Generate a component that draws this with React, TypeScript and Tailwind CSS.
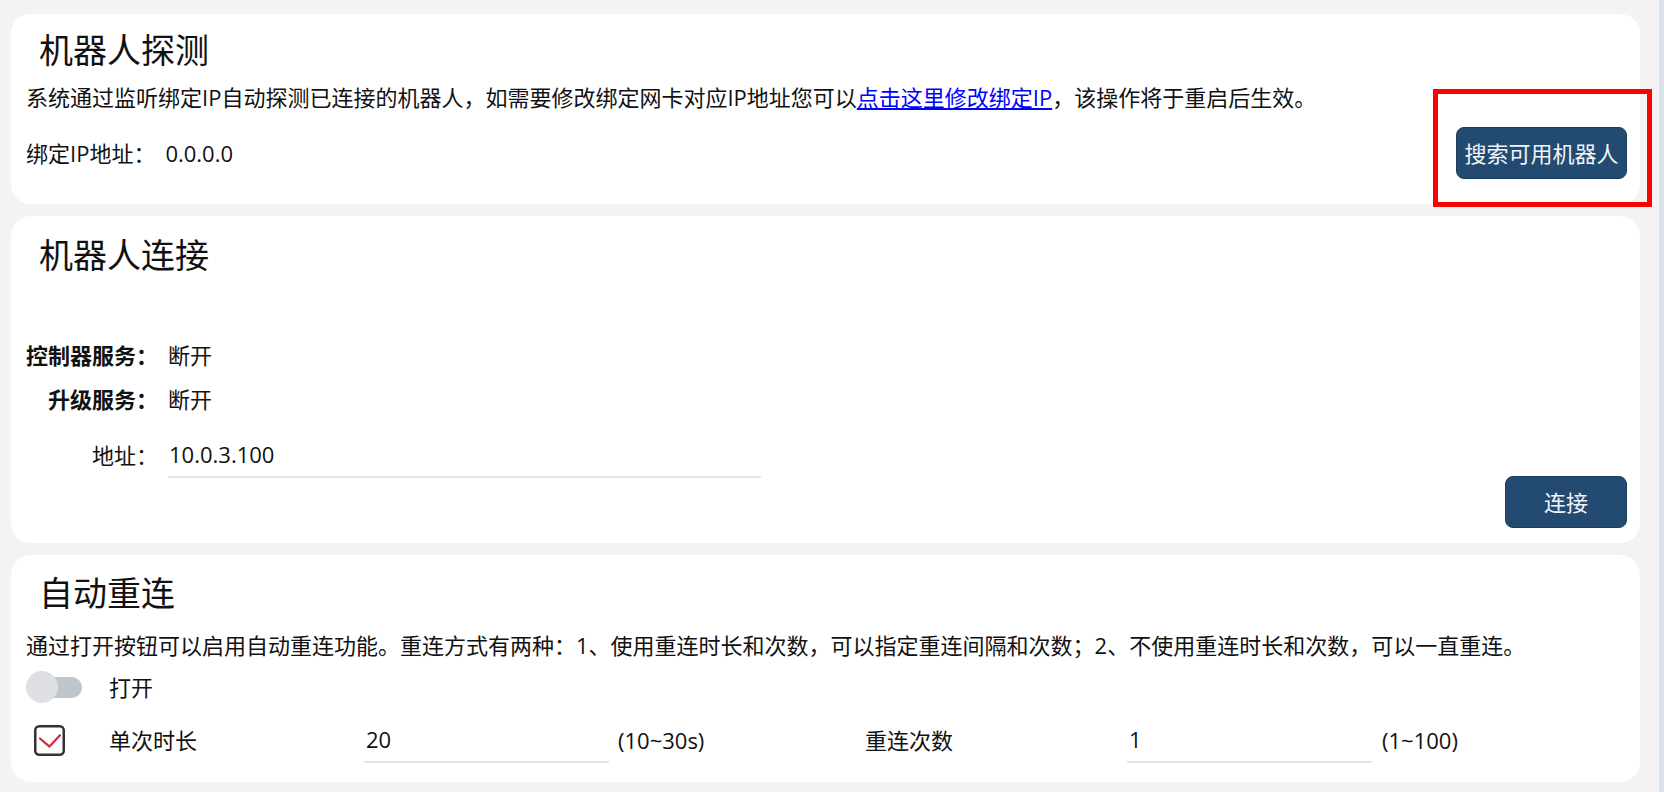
import React from 'react';

const font = { fontFamily: '"Open Sans", "Noto Sans CJK SC", sans-serif' };

function Toggle() {
  return (
    <div className="relative w-[56px] h-[32px]">
      <div className="absolute left-[16px] top-[5.5px] w-[40px] h-[21px] rounded-full bg-[#c0c4cb]" />
      <div className="absolute left-0 top-0 w-[32px] h-[32px] rounded-full bg-[#dedfe2]" />
    </div>
  );
}

function CheckBox() {
  return (
    <svg width="31" height="31" viewBox="0 0 31 31">
      <rect x="1.25" y="1.25" width="28.5" height="28.5" rx="4" fill="#fff" stroke="#333" strokeWidth="2.5" />
      <polyline points="6,13.5 15.5,21.6 26,10.2" fill="none" stroke="#d0283c" strokeWidth="2.2" strokeLinejoin="round" strokeLinecap="round" />
    </svg>
  );
}

function Title({ children }: { children: React.ReactNode }) {
  return <h2 className="ml-[13px] h-[40px] text-[34px] leading-[40px] font-normal text-[#111]">{children}</h2>;
}

function Button({ children, width }: { children: React.ReactNode; width: string }) {
  return (
    <button className={`${width} h-[52px] rounded-[8px] border border-[#1c3e5e] bg-[#234b71] text-[22px] leading-[30px] text-[#f2f5f8]`}>
      {children}
    </button>
  );
}

export default function App() {
  return (
    <div className="flex h-[792px] w-full bg-[#f3f3f3] text-[#111]" style={font}>
      <div className="flex flex-1 flex-col gap-[12px] pt-[14px] pl-[11px] pr-[19px]">
        {/* 机器人探测 */}
        <section className="relative h-[190px] rounded-[20px] bg-white pt-[16px] pl-[15px] pr-[13px]">
          <Title>机器人探测</Title>
          <p className="mt-[12px] text-[22px] leading-[30px]">
            系统通过监听绑定IP自动探测已连接的机器人，如需要修改绑定网卡对应IP地址您可以
            <a href="#" className="text-[#0000ff] underline">点击这里修改绑定IP</a>
            ，该操作将于重启后生效。
          </p>
          <div className="mt-[15px] flex h-[52px] items-center justify-between">
            <div className="flex text-[22px] leading-[30px]">
              <span>绑定IP地址：</span>
              <span className="ml-[10px]">0.0.0.0</span>
            </div>
            <Button width="w-[171px]">搜索可用机器人</Button>
          </div>
          <div className="pointer-events-none absolute left-[1422px] top-[75px] h-[118px] w-[219px] border-[5px] border-[#ff0000]" />
        </section>

        {/* 机器人连接 */}
        <section className="h-[327px] rounded-[20px] bg-white pt-[19px] pl-[15px] pr-[13px]">
          <Title>机器人连接</Title>
          <div className="mt-[65px] flex text-[22px] leading-[30px]">
            <span className="w-[132px] text-right font-bold">控制器服务：</span>
            <span className="ml-[10px]">断开</span>
          </div>
          <div className="mt-[14px] flex text-[22px] leading-[30px]">
            <span className="w-[132px] text-right font-bold">升级服务：</span>
            <span className="ml-[10px]">断开</span>
          </div>
          <div className="mt-[18px] flex h-[46px] items-center text-[22px]">
            <span className="w-[132px] text-right leading-[30px]">地址：</span>
            <input
              defaultValue="10.0.3.100"
              className="ml-[10px] box-border h-[46px] w-[593px] border-b-2 border-[#e4e4e4] bg-transparent pl-[1px] text-[22px] outline-none"
            />
          </div>
          <div className="mt-[-2px] flex justify-end">
            <Button width="w-[122px]">连接</Button>
          </div>
        </section>

        {/* 自动重连 */}
        <section className="h-[227px] rounded-[20px] bg-white pt-[18px] pl-[15px] pr-[13px]">
          <Title>自动重连</Title>
          <p className="mt-[17px] text-[22px] leading-[30px]">
            通过打开按钮可以启用自动重连功能。重连方式有两种：1、使用重连时长和次数，可以指定重连间隔和次数；2、不使用重连时长和次数，可以一直重连。
          </p>
          <div className="mt-[11px] flex h-[32px] items-center text-[22px] leading-[30px]">
            <div className="w-[83px]">
              <Toggle />
            </div>
            <span>打开</span>
          </div>
          <div className="mt-[14px] flex h-[46px] items-center text-[22px] leading-[30px]">
            <div className="flex w-[83px] pl-[8px]">
              <CheckBox />
            </div>
            <span className="w-[255px]">单次时长</span>
            <input
              defaultValue="20"
              className="box-border h-[46px] w-[245px] border-b-2 border-[#e4e4e4] bg-transparent pl-[2px] text-[22px] outline-none"
            />
            <span className="ml-[9px] w-[247px]">(10~30s)</span>
            <span className="w-[262px]">重连次数</span>
            <input
              defaultValue="1"
              className="box-border h-[46px] w-[245px] border-b-2 border-[#e4e4e4] bg-transparent pl-[2px] text-[22px] outline-none"
            />
            <span className="ml-[10px]">(1~100)</span>
          </div>
        </section>
      </div>
      <div className="w-[5px] bg-[#dbe1e9]" />
    </div>
  );
}
